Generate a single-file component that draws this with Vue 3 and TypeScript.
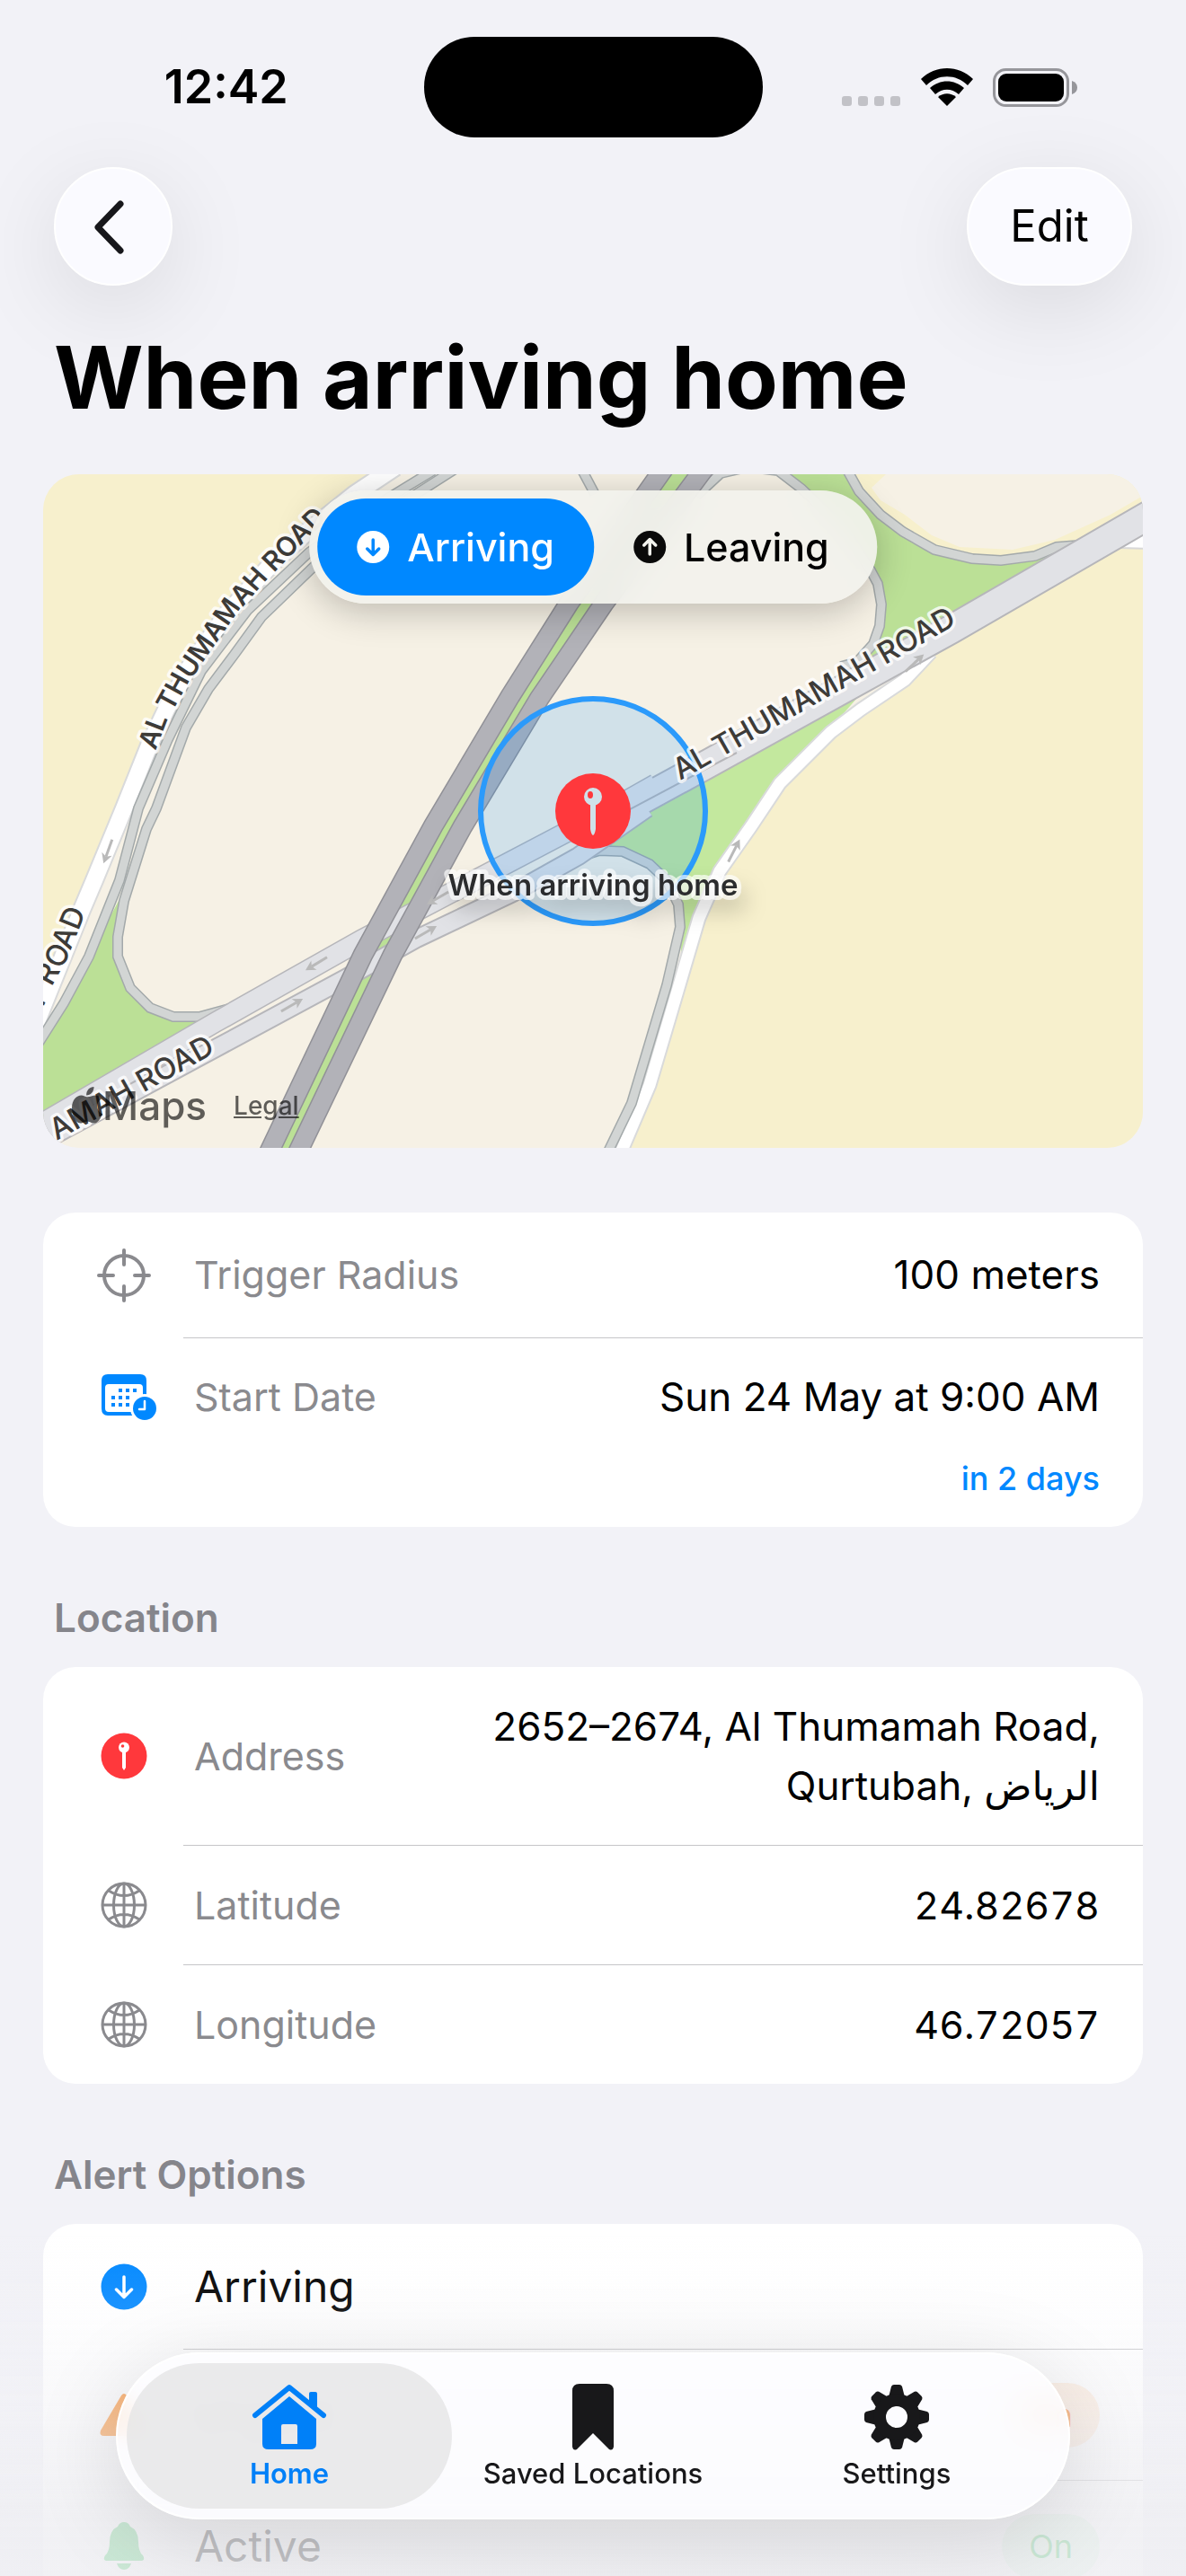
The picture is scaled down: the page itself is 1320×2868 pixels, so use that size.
<script setup lang="ts">
import { ref } from 'vue'

type IconName = 'scope' | 'calendar' | 'pin' | 'globe' | 'down' | 'warning' | 'bell'
type Row = { icon: IconName; label: string; value?: string; note?: string; badge?: string; tone?: string; numeric?: boolean }
type Section = { id: string; title?: string; rows: Row[] }
type Arrow = { x: number; y: number; angle: number }

const mode = ref<'arriving' | 'leaving'>('arriving')
const tab = ref('Home')

const sections: Section[] = [
  {
    id: 'trigger',
    rows: [
      { icon: 'scope', label: 'Trigger Radius', value: '100 meters' },
      { icon: 'calendar', label: 'Start Date', value: 'Sun 24 May at 9:00 AM', note: 'in 2 days' },
    ],
  },
  {
    id: 'location',
    title: 'Location',
    rows: [
      { icon: 'pin', label: 'Address', value: '2652–2674, Al Thumamah Road, Qurtubah, الرياض' },
      { icon: 'globe', label: 'Latitude', value: '24.82678', numeric: true },
      { icon: 'globe', label: 'Longitude', value: '46.72057', numeric: true },
    ],
  },
  {
    id: 'alert',
    title: 'Alert Options',
    rows: [
      { icon: 'down', label: 'Arriving' },
      { icon: 'warning', label: 'Urgent', badge: 'On', tone: 'orange' },
      { icon: 'bell', label: 'Active', badge: 'On', tone: 'green' },
    ],
  },
]

const tabs = ['Home', 'Saved Locations', 'Settings']
const teeth = [0, 45, 90, 135, 180, 225, 270, 315]

const arrows: Arrow[] = [
  { x: 120, y: 948, angle: 110 },
  { x: 487, y: 1000, angle: 150 },
  { x: 352, y: 1073, angle: 149 },
  { x: 325, y: 1119, angle: -30 },
  { x: 474, y: 1038, angle: -30 },
  { x: 817, y: 947, angle: -63 },
  { x: 1018, y: 738, angle: -43 },
]

const road = {
  serviceLeft:
    'M440 520L395 550L366 573L342 592L305 625L252 684L211 743L185 790L166 830L138 900L105 980L91 1013L56 1100L36 1150',
  serviceRight:
    'M1036 726L1023 740L1007 757L958 790L925 815L868 872L836 920L801 970L778 1022L760 1083L723 1208L689 1288',
  rampA: 'M482 524L441 549L395 577L344 615L275 680L224 747L187 823L154 900L133 980L99 1065L71 1117L40 1166',
  rampB:
    'M510 520L460 552L400 590L350 630L291 687L262 727L232 767L207 810L174 900L163 923L138 1003L131 1043L131 1065L145 1100L167 1122L193 1132L222 1132L262 1121',
  rampC: 'M941 520L956 547L980 573L1005 592L1040 612L1082 622L1114 624L1152 619L1176 609L1200 607',
  rampD: 'M775 552L802 527L832 520L866 524L892 544L940 590L969 635L977 650L981 673L979 697L972 717L954 737L936 742',
  rampE: 'M630 966L648 953L667 947L693 948L723 962L742 980L755 1007L757 1032L742 1097L703 1228L674 1288',
  rampF: 'M646 520L662 550',
  west: 'M36 1257L240 1138L403 1046L700 890L730 873',
  east: 'M36 1277L240 1167L383 1090L464 1045L571 994L644 953L720 900',
  main: 'M697 900L785 852L1058 701L1290 567',
  motorwayL: 'M740 520L633 672L568 775L482 920L404 1063L297 1288',
  motorwayR: 'M785 520L672 672L600 778L515 920L437 1063L329 1288',
  median: 'M762 520L652 672L584 776L498 920L420 1063L313 1288',
}
</script>

<template>
  <div class="screen">
    <div class="statusbar">
      <time class="clock">12:42</time>
      <span class="island"></span>
      <div class="indicators">
        <svg class="dots" viewBox="0 0 66 42" aria-hidden="true">
          <rect v-for="n in 4" :key="n" :x="(n - 1) * 18" y="31" width="11" height="11" rx="3" fill="#c2c2c7" />
        </svg>
        <svg class="wifi" viewBox="0 0 58 42" aria-hidden="true">
          <path d="M0 12C16-4 42-4 58 12L52 19C39 6 19 6 6 19Z" />
          <path d="M10 22C21 12 37 12 48 22L42 29C34 22 24 22 16 29Z" />
          <path d="M19 32C25 27 33 27 39 32L29 42Z" />
        </svg>
        <svg class="battery" viewBox="0 0 94 43" aria-hidden="true">
          <rect x="1.5" y="1.5" width="82" height="40" rx="13" fill="none" stroke="#96969b" stroke-width="3" />
          <rect x="6" y="6" width="73" height="31" rx="9" />
          <path d="M88 14Q94 16 94 21.500T88 29Z" fill="#96969b" />
        </svg>
      </div>
    </div>

    <header class="navbar">
      <button class="glass back" type="button" aria-label="Back">
        <svg viewBox="0 0 132 132" aria-hidden="true">
          <path d="M74 41L49 67L74 93" fill="none" stroke="#17171b" stroke-width="7" stroke-linecap="round" stroke-linejoin="round" />
        </svg>
      </button>
      <button class="glass edit" type="button">Edit</button>
    </header>

    <h1>When arriving home</h1>

    <main>
      <section class="map" aria-label="Map">
        <svg class="tiles" viewBox="48 528 1224 750" preserveAspectRatio="xMidYMid slice">
          <defs>
            <path id="label-main" d="M757 869L1120 664" />
            <path id="label-service" d="M173 836L185 805L207 765L230 731L262 685L293 650L330 612L362 580L420 530" />
            <path id="label-west" d="M32 1158L60 1094L75 1067L97 1012L104 995" />
            <path id="label-corner" d="M63 1270L290 1144" />
            <clipPath id="pin-disc"><circle cx="660" cy="903" r="42" /></clipPath>
          </defs>
          <rect x="48" y="528" width="1224" height="750" fill="#f6f1e5" />
          <g fill="#f7f0cd">
            <path d="M48 528H430L366 573L305 625L252 684L211 743L185 790L166 830L138 900L105 980L48 1120Z" />
            <path d="M1272 596L1040 727L958 790L921 815L868 872L831 920L801 970L778 1022L760 1083L723 1208L690 1278H1272Z" />
            <path d="M945 528L980 573L1040 612L1114 624L1200 607L1272 560V528Z" />
          </g>
          <path d="M986 528L970 543L980 557L1007 573L1037 596L1068 609L1127 612L1174 601L1236 573L1272 552V528Z" fill="#f6f1e5" />
          <g fill="#bbe096">
            <path d="M132 1003L139 1006L131 1065L145 1100L167 1122L193 1132L238 1134L48 1243V1150L71 1117L99 1065Z" />
            <path d="M878 528H944L956 547L980 573L1005 592L1040 612L1082 622L1152 619L1195 607L1160 630L960 742L979 697L981 673L969 635L940 590Z" />
          </g>
          <path d="M680 922L960 770L921 815L868 872L801 970L778 1022L758 1062L757 1032L755 1007L742 980L723 962L693 948L655 946Z" fill="#c3e89e" />
          <path :d="road.median" class="line" stroke="#bbe096" stroke-width="16" />
          <path d="M1248 610L1280 590V611Z" fill="#fff" stroke="#d8d8d8" stroke-width="2" />

          <g class="line">
            <g stroke="#d9dadb">
              <path :d="road.serviceLeft" stroke-width="22" />
              <path :d="road.serviceRight" stroke-width="17" />
            </g>
            <g stroke="#fff">
              <path :d="road.serviceLeft" stroke-width="18" />
              <path :d="road.serviceRight" stroke-width="13" />
            </g>
            <template v-for="d in [road.rampA, road.rampB, road.rampC, road.rampD, road.rampE, road.rampF]" :key="d">
              <path :d="d" stroke="#a3a9aa" stroke-width="12" />
              <path :d="d" stroke="#d2d5d4" stroke-width="9" />
            </template>
            <g stroke="#b6b6ba">
              <path :d="road.west" stroke-width="24" />
              <path :d="road.east" stroke-width="22" />
              <path :d="road.main" stroke-width="34" />
            </g>
            <g stroke="#e1e2e6">
              <path :d="road.west" stroke-width="21" />
              <path :d="road.east" stroke-width="18" />
              <path :d="road.main" stroke-width="30" />
            </g>
            <path d="M640 938L701 901L820 838" stroke="#b6b6ba" stroke-width="2" />
            <g stroke="#919197">
              <path :d="road.motorwayL" stroke-width="23" />
              <path :d="road.motorwayR" stroke-width="23" />
            </g>
            <g stroke="#b2b2b8">
              <path :d="road.motorwayL" stroke-width="20" />
              <path :d="road.motorwayR" stroke-width="20" />
            </g>
          </g>

          <g v-for="a in arrows" :key="a.x" :transform="`translate(${a.x} ${a.y}) rotate(${a.angle})`">
            <path d="M-14 0H6" stroke="#b9b9b9" stroke-width="3" />
            <path d="M14 0L3-6L6 0L3 6Z" fill="#b9b9b9" />
          </g>

          <circle cx="660" cy="903" r="125" fill="#0088ff" fill-opacity="0.15" stroke="#2b9afb" stroke-width="6" />

          <g class="roadname">
            <text><textPath href="#label-main">AL THUMAMAH ROAD</textPath></text>
            <text class="minor"><textPath href="#label-service">AL THUMAMAH ROAD</textPath></text>
            <text text-anchor="end"><textPath href="#label-west" startOffset="88%">Y ROAD</textPath></text>
            <text><textPath href="#label-corner">AMAH ROAD</textPath></text>
          </g>

          <circle cx="660" cy="903" r="42" fill="#ff383c" />
          <g clip-path="url(#pin-disc)" fill="#cfe1ea">
            <circle cx="660" cy="887" r="10" />
            <path d="M657 895H663V923Q662 929 660 930Q658 929 657 923Z" />
          </g>
          <ellipse cx="657" cy="885" rx="3" ry="4" fill="#ff383c" />
          <text class="pinname" x="660" y="997" text-anchor="middle">When arriving home</text>
        </svg>

        <div class="segmented">
          <button type="button" :class="{ on: mode === 'arriving' }" :aria-pressed="mode === 'arriving'" @click="mode = 'arriving'">
            <svg viewBox="0 0 36 36" aria-hidden="true">
              <circle cx="18" cy="18" r="18" fill="#fff" />
              <path d="M18 10V26M11.500 20L18 26.500L24.500 20" fill="none" stroke="#0088ff" stroke-width="3.500" stroke-linecap="round" stroke-linejoin="round" />
            </svg>
            Arriving
          </button>
          <button type="button" :class="{ on: mode === 'leaving' }" :aria-pressed="mode === 'leaving'" @click="mode = 'leaving'">
            <svg viewBox="0 0 36 36" aria-hidden="true">
              <circle cx="18" cy="18" r="18" fill="#0a0a0a" />
              <path d="M18 26V10M11.500 16L18 9.500L24.500 16" fill="none" stroke="#f2f3ee" stroke-width="3.500" stroke-linecap="round" stroke-linejoin="round" />
            </svg>
            Leaving
          </button>
        </div>

        <div class="attribution">
          <span class="brand">
            <svg viewBox="0 0 36 44" aria-hidden="true">
              <path d="M18 12C22 12 24 10 28 10C31 10 34 12 35 14C27 19 29 29 36 32C33 39 30 43 26 43C23 43 22 41 18 41C14 41 13 43 10 43C4 43 0 33 0 25C0 15 6 10 11 10C14 10 16 12 18 12Z" />
              <path d="M17 10C17 4 21 0 26 0C26 6 22 10 17 10Z" />
            </svg>
            Maps
          </span>
          <a href="#legal">Legal</a>
        </div>
      </section>

      <section v-for="s in sections" :key="s.id" class="group" :class="s.id">
        <h2 v-if="s.title">{{ s.title }}</h2>
        <ul class="card">
          <li v-for="r in s.rows" :key="r.label" class="row">
            <svg class="icon" viewBox="0 0 60 60" aria-hidden="true">
              <g v-if="r.icon === 'scope'" fill="none" stroke="#8a8a8e" stroke-width="4" stroke-linecap="round">
                <circle cx="30" cy="30" r="22" />
                <path d="M30 2V18M30 42V58M2 30H18M42 30H58" />
              </g>
              <g v-else-if="r.icon === 'calendar'" fill="#0088ff">
                <path fill-rule="evenodd" d="M12 5H48Q55 5 55 12V43Q55 51 48 51H12Q5 51 5 43V12Q5 5 12 5ZM13 16Q9 16 9 20V43Q9 47 13 47H47Q51 47 51 43V20Q51 16 47 16Z" />
                <path d="M24 21h4v4h-4zM32 21h4v4h-4zM40 21h4v4h-4zM16 29h4v4h-4zM24 29h4v4h-4zM32 29h4v4h-4zM16 37h4v4h-4zM24 37h4v4h-4zM32 37h4v4h-4z" />
                <circle cx="53" cy="43" r="16" fill="#fff" />
                <circle cx="53" cy="43" r="13" />
                <path d="M53 35V44H47" fill="none" stroke="#fff" stroke-width="2.500" stroke-linecap="round" stroke-linejoin="round" />
              </g>
              <g v-else-if="r.icon === 'pin'" fill="#fff">
                <circle cx="30" cy="30" r="25.500" fill="#ff383c" />
                <circle cx="30" cy="20.500" r="6" />
                <path d="M28 25H32V43L30 46L28 43Z" />
                <circle cx="28.500" cy="19" r="1.800" fill="#ff383c" />
              </g>
              <g v-else-if="r.icon === 'globe'" fill="none" stroke="#8a8a8e" stroke-width="3">
                <circle cx="30" cy="30" r="24" />
                <ellipse cx="30" cy="30" rx="11.500" ry="24" />
                <path d="M30 6V54M6 30H54M13 14Q30 25 47 14M13 46Q30 35 47 46" />
              </g>
              <g v-else-if="r.icon === 'down'">
                <circle cx="30" cy="30" r="25.500" fill="#0088ff" />
                <path d="M30 19V41M21.500 33L30 41.500L38.500 33" fill="none" stroke="#fff" stroke-width="3.500" stroke-linecap="round" stroke-linejoin="round" />
              </g>
              <path v-else-if="r.icon === 'warning'" d="M27 9Q30 5 33 9L56 48Q58 54 52 54H8Q2 54 4 48Z" fill="#ff8d28" />
              <g v-else fill="#34c759">
                <path d="M30 4Q35 4 37 9Q46 13 46 26Q46 37 51 41Q54 46 50 47H10Q6 46 9 41Q14 37 14 26Q14 13 23 9Q25 4 30 4Z" />
                <path d="M22 50H38Q36 57 30 57Q24 57 22 50Z" />
              </g>
            </svg>
            <div class="body">
              <span class="label">{{ r.label }}</span>
              <span v-if="r.value" class="value" :class="{ numeric: r.numeric }">
                {{ r.value }}
                <small v-if="r.note">{{ r.note }}</small>
              </span>
              <span v-if="r.badge" class="badge" :class="r.tone">{{ r.badge }}</span>
            </div>
          </li>
        </ul>
      </section>
    </main>

    <div class="fade"></div>

    <nav class="tabbar">
      <a v-for="t in tabs" :key="t" href="#" :class="{ on: tab === t }" @click.prevent="tab = t">
        <svg v-if="t === 'Home'" viewBox="0 0 84 76" aria-hidden="true">
          <path d="M4 36L42 5L80 36" fill="none" stroke="currentColor" stroke-width="6" stroke-linecap="round" stroke-linejoin="round" />
          <path d="M64 12Q64 10 66 10H71Q73 10 73 12V31L64 23Z" fill="currentColor" />
          <path fill-rule="evenodd" d="M42 15L72 40V68Q72 74 65 74H19Q12 74 12 68V40ZM35 46Q33 46 33 48V68H51V48Q51 46 49 46Z" fill="currentColor" />
        </svg>
        <svg v-else-if="t === 'Settings'" viewBox="0 0 84 76" aria-hidden="true">
          <g transform="translate(42 38)" fill="currentColor">
            <path v-for="a in teeth" :key="a" d="M-9-22L-6-34Q-5-36-3-36H3Q5-36 6-34L9-22Z" :transform="`rotate(${a})`" />
            <path fill-rule="evenodd" d="M0-26A26 26 0 1 1 0 26A26 26 0 1 1 0-26ZM0-12A12 12 0 1 0 0 12A12 12 0 1 0 0-12Z" />
          </g>
        </svg>
        <svg v-else viewBox="0 0 84 76" aria-hidden="true">
          <path d="M27 1H57Q65 1 65 9V71Q64 76 60 74L42 56L24 74Q20 76 19 71V9Q19 1 27 1Z" fill="currentColor" />
        </svg>
        <span>{{ t }}</span>
      </a>
    </nav>
  </div>
</template>

<style>
body {
  margin: 0;
  background: #f2f2f7;
}
</style>

<style scoped>
* {
  box-sizing: border-box;
}
.screen {
  position: relative;
  height: 100vh;
  overflow: hidden;
  background: #f2f2f7;
  color: #000;
  font-family: Inter, 'Noto Sans', 'DejaVu Sans', sans-serif;
  font-size: 43px;
  line-height: 66px;
}
button {
  border: 0;
  padding: 0;
  font: inherit;
  color: inherit;
}
svg {
  display: block;
  flex: none;
  overflow: visible;
}

.statusbar {
  display: grid;
  grid-template-columns: 1fr 377px 1fr;
  align-items: center;
  height: 112px;
  margin-top: 41px;
}
.clock {
  padding-left: 32px;
  text-align: center;
  font-size: 52px;
  font-weight: 600;
}
.island {
  height: 112px;
  border-radius: 56px;
  background: #000;
}
.indicators {
  display: flex;
  align-items: center;
  justify-content: flex-end;
  gap: 22px;
  padding-right: 121px;
}
.dots {
  width: 66px;
  height: 42px;
}
.wifi {
  width: 58px;
  height: 42px;
}
.battery {
  width: 94px;
  height: 43px;
}

.navbar {
  display: flex;
  justify-content: space-between;
  padding: 33px 60px 0;
}
.glass {
  height: 132px;
  border: 2px solid #fff;
  border-radius: 66px;
  background: #fafaff;
  box-shadow: 0 24px 100px rgba(0, 0, 0, 0.1);
}
.back {
  width: 132px;
}
.back svg {
  width: 132px;
  margin: -2px;
}
.edit {
  width: 184px;
  font-size: 49px;
}

h1 {
  margin: 44px 60px 50px;
  font-size: 96px;
  line-height: 116px;
  font-weight: 700;
}
main {
  padding: 0 48px;
}

.map {
  position: relative;
  height: 750px;
  border-radius: 40px;
  overflow: hidden;
}
.tiles {
  width: 100%;
  height: 100%;
}
.line {
  fill: none;
}
.roadname {
  font-size: 33px;
  font-weight: 500;
  fill: #3d3b38;
  stroke: rgba(255, 255, 255, 0.8);
  stroke-width: 7px;
  stroke-linejoin: round;
  paint-order: stroke;
}
.minor {
  font-size: 30px;
  font-weight: 600;
}
.pinname {
  font-size: 33px;
  font-weight: 600;
  fill: #2b2c2e;
  stroke: rgba(255, 255, 255, 0.65);
  stroke-width: 10px;
  stroke-linejoin: round;
  paint-order: stroke;
  filter: drop-shadow(6px 14px 12px rgba(0, 0, 0, 0.2));
}
.segmented {
  position: absolute;
  top: 18px;
  left: 50%;
  display: flex;
  padding: 9px;
  border-radius: 63px;
  background: rgba(242, 242, 237, 0.92);
  box-shadow: 0 8px 40px rgba(0, 0, 0, 0.24);
  backdrop-filter: blur(16px);
  transform: translateX(-50%);
}
.segmented button {
  display: flex;
  align-items: center;
  gap: 20px;
  height: 108px;
  padding: 0 44px;
  border-radius: 54px;
  background: none;
  font-weight: 500;
}
.segmented .on {
  background: #0088ff;
  color: #fff;
}
.segmented svg {
  width: 36px;
}
.attribution {
  position: absolute;
  left: 32px;
  bottom: 14px;
  display: flex;
  align-items: center;
  gap: 30px;
  opacity: 0.62;
}
.brand {
  display: flex;
  align-items: center;
  font-size: 44px;
  font-weight: 500;
}
.brand svg {
  width: 34px;
}
.attribution a {
  color: #000;
  font-size: 28px;
  font-weight: 500;
}

.trigger {
  margin-top: 72px;
}
h2 {
  margin: 0;
  padding: 68px 12px 22px;
  color: #85858b;
  font-size: 44px;
  line-height: 66px;
  font-weight: 600;
}
.card {
  margin: 0;
  padding: 0;
  border-radius: 36px;
  background: #fff;
  list-style: none;
}
.row {
  display: flex;
  align-items: stretch;
  padding-left: 60px;
}
.icon {
  width: 60px;
  height: 60px;
  align-self: center;
}
.body {
  flex: 1;
  display: flex;
  align-items: center;
  justify-content: space-between;
  gap: 60px;
  margin-left: 36px;
  padding: 33px 48px 33px 12px;
}
.row + .row .body {
  border-top: 1px solid #c6c6c8;
}
.label {
  flex: none;
  color: #8a8a8e;
}
.value {
  max-width: 700px;
  font-size: 44px;
  text-align: right;
}
.numeric {
  font-size: 43px;
  font-variant-numeric: tabular-nums;
}
.value small {
  display: block;
  margin-top: 31px;
  color: #0088ff;
  font-size: 36px;
  line-height: 54px;
  font-weight: 500;
}
.trigger .row:first-child .body {
  padding-top: 36px;
  padding-bottom: 37px;
}
.trigger .row:last-child .body {
  align-items: flex-start;
  padding-top: 32px;
  padding-bottom: 27px;
}
.trigger .row:last-child .icon {
  align-self: flex-start;
  margin-top: 36px;
}
.alert .body {
  height: 146px;
}
.alert .row:first-child .body {
  height: 139px;
}
.alert .label {
  color: #000;
  font-size: 48px;
}
.badge {
  height: 72px;
  padding: 0 30px;
  border-radius: 36px;
  font-size: 36px;
  line-height: 72px;
}
.orange {
  background: rgba(255, 141, 40, 0.15);
  color: #ff8d28;
}
.green {
  background: rgba(52, 199, 89, 0.15);
  color: #34c759;
}

.fade {
  position: fixed;
  inset: auto 0 0;
  height: 380px;
  background: linear-gradient(rgba(242, 242, 247, 0), rgba(242, 242, 247, 0.12) 24%, rgba(241, 241, 245, 0.5) 52%, rgba(238, 238, 242, 0.8) 84%, rgba(238, 238, 242, 0.82));
  pointer-events: none;
}
.tabbar {
  position: fixed;
  bottom: 63px;
  left: 129px;
  right: 129px;
  display: flex;
  height: 186px;
  padding: 10px;
  border: 2px solid #fff;
  border-radius: 93px;
  background: rgba(253, 253, 255, 0.84);
  box-shadow: 0 20px 100px rgba(0, 0, 0, 0.13);
  backdrop-filter: blur(10px);
}
.tabbar a {
  flex: 1;
  display: flex;
  flex-direction: column;
  align-items: center;
  gap: 5px;
  margin: 0 -12px;
  padding-top: 22px;
  border-radius: 81px;
  color: #18181a;
  font-size: 31px;
  line-height: 40px;
  font-weight: 500;
  text-decoration: none;
}
.tabbar a:first-child {
  margin-left: 0;
}
.tabbar a:last-child {
  margin-right: 0;
}
.tabbar .on {
  background: rgba(228, 228, 229, 0.78);
  color: #0080f8;
  font-weight: 600;
}
.tabbar svg {
  width: 84px;
  height: 76px;
}
</style>
